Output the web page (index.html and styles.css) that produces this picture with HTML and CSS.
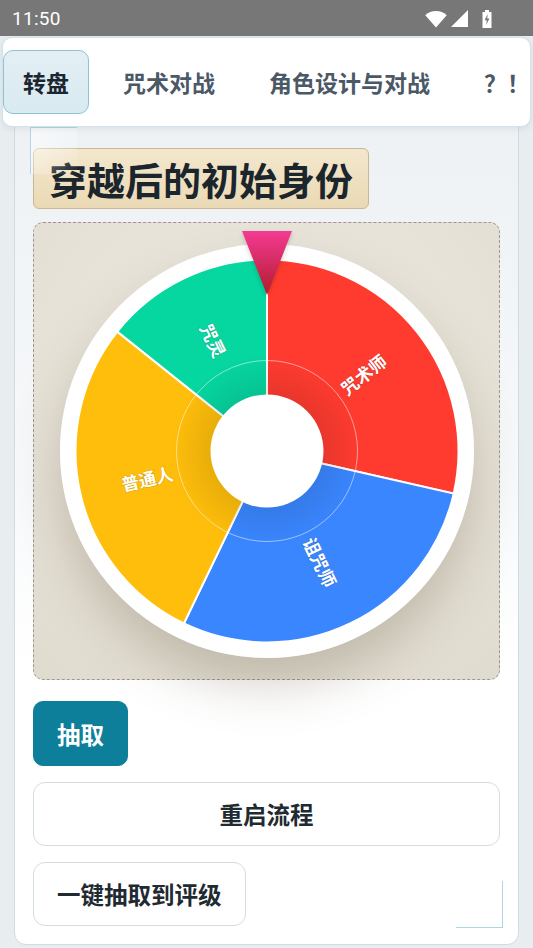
FILE: index.html
```html
<!DOCTYPE html>
<html lang="zh">
<head>
<meta charset="utf-8">
<title>转盘</title>
<link rel="stylesheet" href="styles.css">
</head>
<body>
<div class="status">
  <span class="time">11:50</span>
  <div class="sicons">
    <svg class="wifi" width="22" height="18" viewBox="0 0 22 18"><path d="M11 17.5 L0.3 5.2 A16 16 0 0 1 21.7 5.2 Z" fill="#fff"/></svg>
    <svg class="signal" width="17" height="17" viewBox="0 0 17 17"><path d="M17 0 V17 H0 Z" fill="#fff"/></svg>
    <svg class="battery" width="10" height="18" viewBox="0 0 10 18"><path d="M3 0 H7 V2 H9.5 V18 H0.5 V2 H3 Z" fill="#fff"/><path d="M5.8 4 L2.6 10.2 H4.8 L4.2 15 L7.4 8.6 H5.2 Z" fill="#777"/></svg>
  </div>
</div>
<nav class="tabs">
  <div class="tab active">转盘</div>
  <div class="tab">咒术对战</div>
  <div class="tab">角色设计与对战</div>
  <div class="tab">？！</div>
</nav>
<main class="card">
  <div class="badge">穿越后的初始身份</div>
  <section class="stage">
    <div class="wheel">
      <svg width="414" height="414" viewBox="0 0 414 414">
        <defs>
          <radialGradient id="shade" cx="207" cy="207" r="191.5" gradientUnits="userSpaceOnUse">
            <stop offset="0.29" stop-color="#000" stop-opacity="0.09"/>
            <stop offset="0.5" stop-color="#000" stop-opacity="0"/>
          </radialGradient>
        </defs>
        <circle cx="207" cy="207" r="207" fill="#fff"/>
        <path d="M207 207 L207 15.5 A191.5 191.5 0 0 1 393.7 249.6 Z" fill="#ff3b30" stroke="#fff" stroke-width="2"/>
        <path d="M207 207 L393.7 249.6 A191.5 191.5 0 0 1 123.9 379.5 Z" fill="#3a86ff" stroke="#fff" stroke-width="2"/>
        <path d="M207 207 L123.9 379.5 A191.5 191.5 0 0 1 57.3 87.6 Z" fill="#ffbe0b" stroke="#fff" stroke-width="2"/>
        <path d="M207 207 L57.3 87.6 A191.5 191.5 0 0 1 207 15.5 Z" fill="#06d6a0" stroke="#fff" stroke-width="2"/>
        <circle cx="207" cy="207" r="190" fill="url(#shade)"/>
        <circle cx="207" cy="207" r="90.5" fill="none" stroke="#fff" stroke-opacity="0.5" stroke-width="1"/>
        <g class="lbl">
          <text x="303.2" y="130.3" transform="rotate(-38.57 303.2 130.3)">咒术师</text>
          <text x="260.4" y="317.8" transform="rotate(64.29 260.4 317.8)">诅咒师</text>
          <text x="87.1" y="234.4" transform="rotate(-12.86 87.1 234.4)">普通人</text>
          <text x="153.6" y="96.2" transform="rotate(64.29 153.6 96.2)">咒灵</text>
        </g>
        <circle cx="207" cy="207" r="56.5" fill="#fff"/>
      </svg>
      <svg class="pointer" width="52" height="66" viewBox="0 0 52 66">
        <defs>
          <linearGradient id="pg" x1="0" y1="0" x2="0" y2="1">
            <stop offset="0" stop-color="#f53a93"/>
            <stop offset="1" stop-color="#b01c2c"/>
          </linearGradient>
        </defs>
        <path d="M1 0 H51 L26 64 Z" fill="url(#pg)"/>
      </svg>
    </div>
  </section>
  <div class="btn primary">抽取</div>
  <div class="btn wide">重启流程</div>
  <div class="btn">一键抽取到评级</div>
</main>
</body>
</html>
```

FILE: styles.css
```css
* { box-sizing: border-box; }
html, body {
  margin: 0;
  padding: 0;
}
body {
  width: 533px;
  height: 948px;
  overflow: hidden;
  background: #e8edf0;
  font-family: "Noto Sans CJK SC", "Noto Sans", sans-serif;
}
.status {
  height: 36px;
  background: #777777;
  display: flex;
  align-items: center;
  justify-content: space-between;
  padding: 0 0 0 12px;
}
.time {
  font-family: Roboto, "Liberation Sans", sans-serif;
  color: #fff;
  font-size: 19px;
  letter-spacing: 0.3px;
}
.sicons {
  display: flex;
  align-items: center;
  gap: 4px;
  margin-right: 41px;
  padding-top: 1px;
}
.signal { margin-right: 10px; }
.tabs {
  position: relative;
  z-index: 2;
  margin: 1px 2px 0 2px;
  height: 90px;
  background: #fff;
  border: 1px solid #d3e3ea;
  border-radius: 10px;
  box-shadow: 0 2px 6px rgba(80, 110, 130, 0.12);
  display: flex;
  align-items: center;
  gap: 14px;
  overflow: hidden;
  white-space: nowrap;
}
.tab {
  flex-shrink: 0;
  height: 64px;
  padding: 0 19px;
  display: flex;
  align-items: center;
  font-size: 23px;
  font-weight: 700;
  color: #4b5966;
  border: 1px solid transparent;
  border-radius: 10px;
}
.tab.active {
  color: #1c2630;
  background: linear-gradient(180deg, #e3eff4, #d9eaf1);
  border-color: #8ec3d5;
}
.card {
  position: relative;
  z-index: 1;
  margin: -16px 14px 0 14px;
  height: 834px;
  border: 1px solid #cfdce3;
  border-radius: 12px;
  background: linear-gradient(180deg, #edf1f4 0, #f6f8fa 320px, #ffffff 560px);
  padding: 36px 18px 0 18px;
  display: flex;
  flex-direction: column;
  align-items: flex-start;
}
.card::before,
.card::after {
  content: "";
  position: absolute;
  width: 46px;
  height: 46px;
}
.card::before {
  left: 15px;
  top: 15px;
  border-top: 1.5px solid #b2d6e1;
  border-left: 1.5px solid #b2d6e1;
  background: linear-gradient(135deg, rgba(255, 255, 255, 0.6), rgba(255, 255, 255, 0));
}
.card::after {
  right: 15px;
  bottom: 16px;
  border-bottom: 1.5px solid #b2d6e1;
  border-right: 1.5px solid #b2d6e1;
}
.badge {
  height: 61px;
  padding: 0 15px;
  display: flex;
  align-items: center;
  font-size: 38px;
  font-weight: 700;
  color: #1b252c;
  background: linear-gradient(180deg, #f3e7cd, #ead9b5);
  border: 1px solid #cbb793;
  border-radius: 6px;
}
.stage {
  margin-top: 13px;
  width: 100%;
  height: 458px;
  border: 1px dashed #9d978d;
  border-radius: 10px;
  background: radial-gradient(circle at 50% 35%, #ece8df 0, #e7e2d7 60%, #e0dbcf 100%);
  display: flex;
  align-items: center;
  justify-content: center;
}
.wheel {
  position: relative;
  width: 414px;
  height: 414px;
  border-radius: 50%;
  box-shadow: 0 26px 50px rgba(90, 78, 55, 0.26);
}
.wheel > svg:first-child { display: block; }
.lbl text {
  fill: #fff;
  font-family: "Noto Sans CJK SC", sans-serif;
  font-weight: 700;
  font-size: 17.5px;
  text-anchor: middle;
  dominant-baseline: central;
  paint-order: stroke;
  stroke: rgba(0, 0, 0, 0.12);
  stroke-width: 1.5px;
}
.pointer {
  position: absolute;
  left: 181px;
  top: -13px;
  filter: drop-shadow(0 2px 2px rgba(0, 0, 0, 0.18));
}
.btn {
  height: 64px;
  padding: 0 23px;
  display: flex;
  align-items: center;
  justify-content: center;
  font-size: 23.5px;
  font-weight: 700;
  color: #1f2a31;
  background: #fff;
  border: 1.5px solid #d4dde2;
  border-radius: 12px;
  margin-top: 16px;
}
.btn.primary {
  margin-top: 21px;
  height: 65px;
  color: #fff;
  background: #0d7f9a;
  border-color: #0d7f9a;
  border-radius: 10px;
}
.btn.wide {
  width: 100%;
}
```
